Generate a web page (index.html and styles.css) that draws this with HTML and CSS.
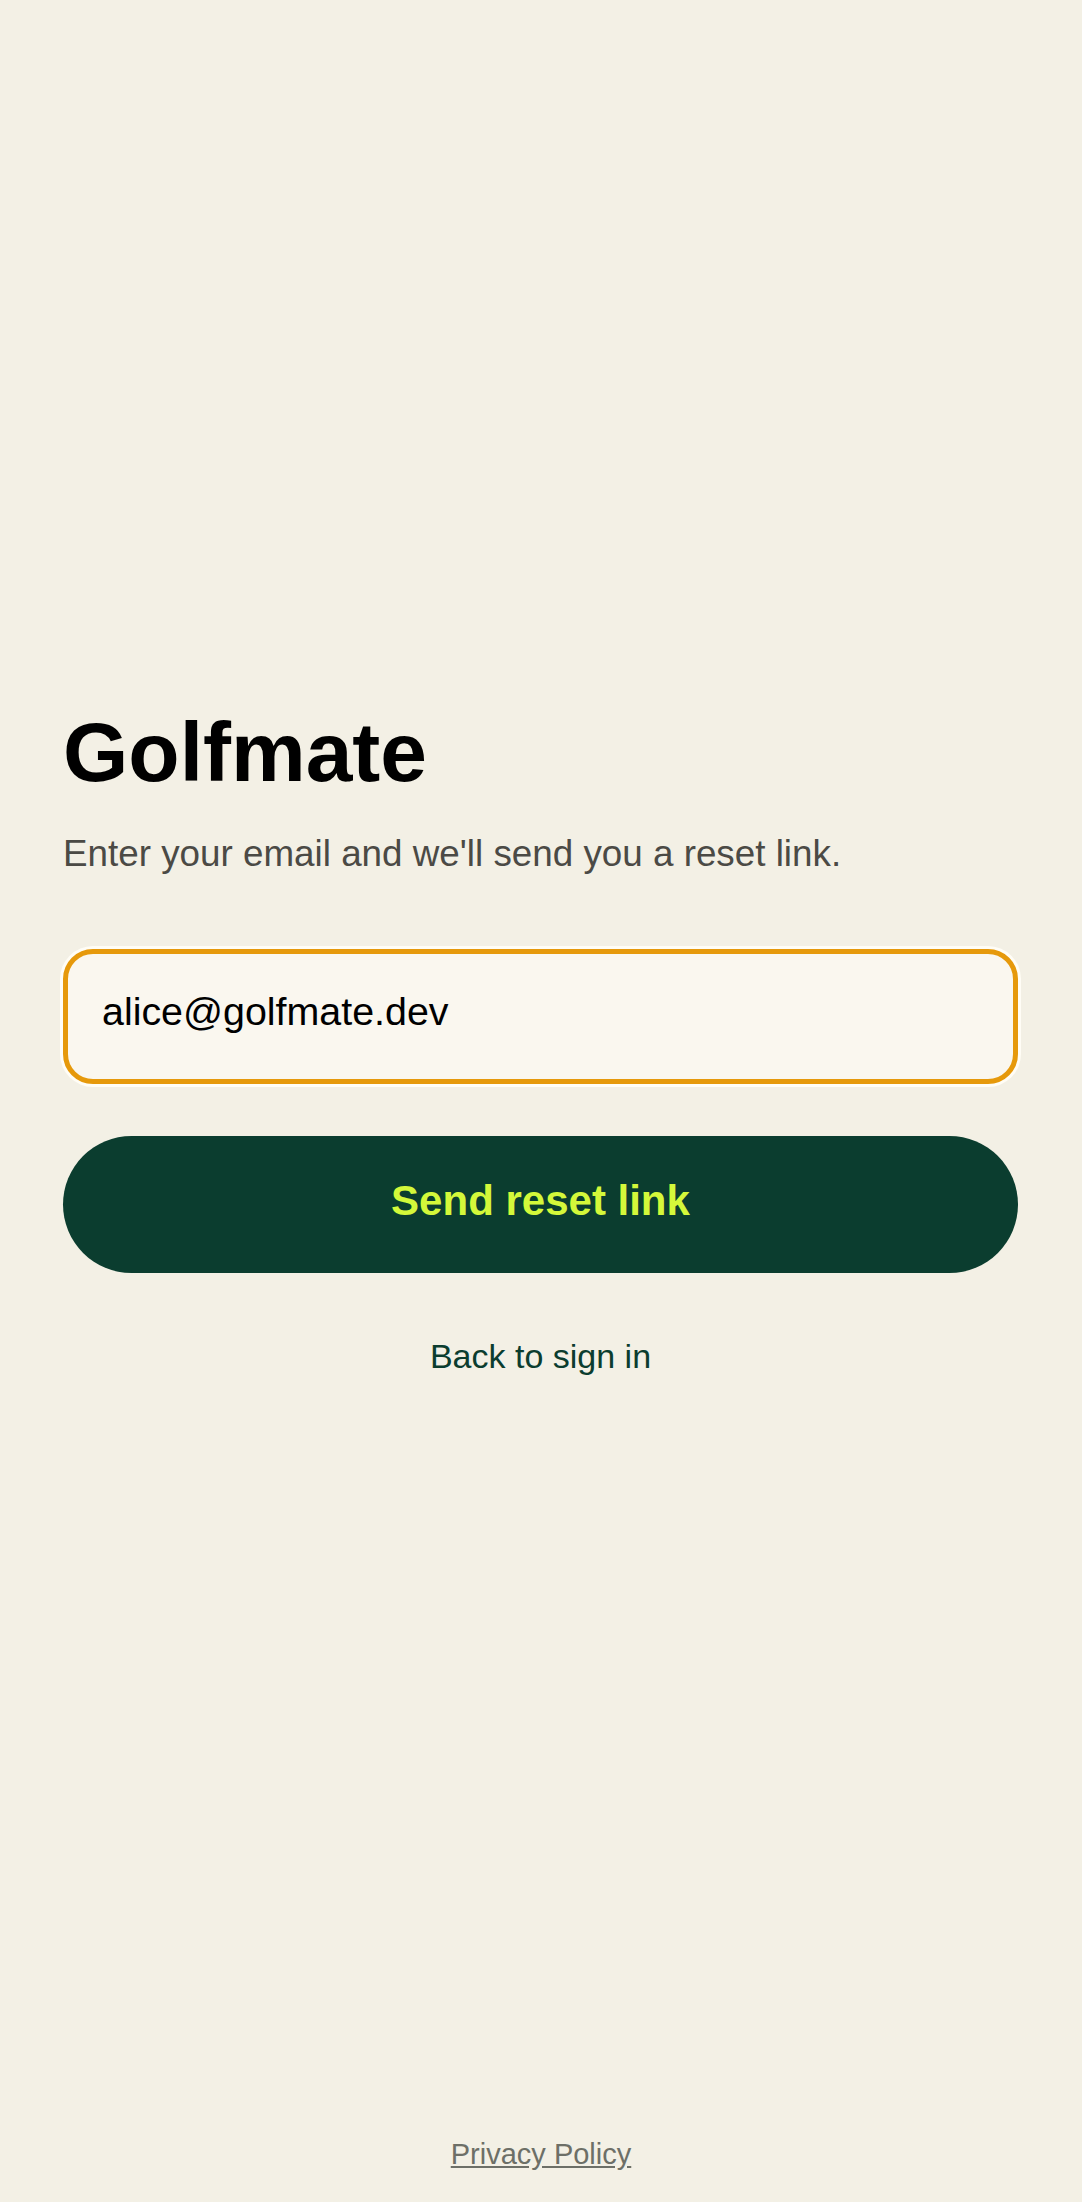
FILE: index.html
```html
<!DOCTYPE html>
<html lang="en">
<head>
<meta charset="utf-8">
<meta name="viewport" content="width=device-width, initial-scale=1">
<title>Golfmate – Reset password</title>
<link rel="stylesheet" href="styles.css">
</head>
<body>
  <main class="page">
    <section class="card">
      <h1 class="brand">Golfmate</h1>
      <p class="lead">Enter your email and we'll send you a reset link.</p>
      <form class="form">
        <input class="field" type="email" value="alice@golfmate.dev" aria-label="Email">
        <button class="primary" type="button">Send reset link</button>
      </form>
      <a class="back" href="#">Back to sign in</a>
    </section>
  </main>
  <footer class="footer">
    <a class="privacy" href="#">Privacy Policy</a>
  </footer>
</body>
</html>
```

FILE: styles.css
```css
* { box-sizing: border-box; }

html, body {
  margin: 0;
  padding: 0;
}

body {
  min-height: 100vh;
  background: #f3f0e5;
  font-family: "Liberation Sans", Arial, sans-serif;
  color: #000;
  display: flex;
  flex-direction: column;
}

.page {
  flex: 1;
  display: flex;
  flex-direction: column;
  justify-content: center;
  padding: 0 64px 59px 63px;
}

.card {
  display: flex;
  flex-direction: column;
}

.brand {
  margin: 0;
  font-size: 84px;
  line-height: 100px;
  font-weight: 700;
  color: #000;
}

.lead {
  margin: 28px 0 0;
  font-size: 36.8px;
  line-height: 48px;
  color: #4b4a45;
}

.form {
  margin: 71px 0 0;
  display: flex;
  flex-direction: column;
  gap: 52px;
}

.field {
  display: block;
  width: 100%;
  height: 135px;
  margin: 0;
  padding: 0 34px 10px 34px;
  border: 5px solid #e6990b;
  border-radius: 30px;
  background: #faf7ef;
  box-shadow: 0 0 0 3px #fffdf6;
  font-family: "Liberation Sans", Arial, sans-serif;
  font-size: 39.4px;
  color: #000;
  outline: none;
}

.primary {
  display: flex;
  align-items: center;
  justify-content: center;
  width: 100%;
  height: 137px;
  margin: 0;
  padding: 0 0 8px;
  border: 0;
  border-radius: 999px;
  background: #0b3d2f;
  color: #d4f83a;
  font-family: "Liberation Sans", Arial, sans-serif;
  font-size: 42px;
  font-weight: 700;
  cursor: pointer;
}

.back {
  margin: 63px 0 0;
  align-self: center;
  font-size: 34px;
  line-height: 40px;
  color: #0b3d2f;
  text-decoration: none;
}

.footer {
  display: flex;
  justify-content: center;
  padding: 0 0 31px;
}

.privacy {
  font-size: 29px;
  line-height: 34px;
  color: #6d6f67;
  text-decoration: underline;
}
```
